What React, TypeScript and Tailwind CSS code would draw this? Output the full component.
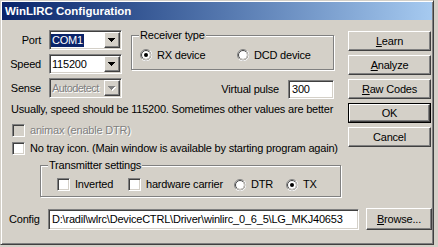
import type { ReactNode } from "react";

const sunken =
  "border border-t-[#808080] border-l-[#808080] border-r-white border-b-white shadow-[inset_1px_1px_0_#404040,inset_-1px_-1px_0_#d4d0c8]";
const raised =
  "border border-t-white border-l-white border-r-[#404040] border-b-[#404040] shadow-[inset_-1px_-1px_0_#808080]";
const etched = "border border-[#808080] shadow-[inset_1px_1px_0_#fff,1px_1px_0_#fff]";
const grayText = "text-[#808080] [text-shadow:1px_1px_0_#fff]";

function Arrow({ disabled }: { disabled?: boolean }) {
  const tri = (dx: number, fill: string) => (
    <g fill={fill} transform={`translate(${dx} ${dx})`}>
      <rect x="0" y="0" width="7" height="1" />
      <rect x="1" y="1" width="5" height="1" />
      <rect x="2" y="2" width="3" height="1" />
      <rect x="3" y="3" width="1" height="1" />
    </g>
  );
  return (
    <svg width="8" height="5" viewBox="0 0 8 5" shapeRendering="crispEdges">
      {disabled && tri(1, "#fff")}
      {tri(0, disabled ? "#808080" : "#000")}
    </svg>
  );
}

function Combo({ children, disabled }: { children: ReactNode; disabled?: boolean }) {
  return (
    <div
      className={`${sunken} ml-[8px] w-[73px] h-[20px] p-[1px] flex ${
        disabled ? "bg-[#d4d0c8]" : "bg-white"
      }`}
    >
      <div className="flex-1 flex items-center overflow-hidden whitespace-nowrap">{children}</div>
      <div className={`${raised} w-[16px] h-[16px] bg-[#d4d0c8] flex items-center justify-center`}>
        <Arrow disabled={disabled} />
      </div>
    </div>
  );
}

function Radio({ checked }: { checked?: boolean }) {
  return (
    <svg width="12" height="12" viewBox="0 0 12 12" className="shrink-0">
      <circle cx="6" cy="6" r="5.5" fill="#fff" stroke="#808080" />
      <path d="M10.2 1.8 A5.5 5.5 0 0 1 1.8 10.2" fill="none" stroke="#fff" />
      <circle cx="6" cy="6" r="4.5" fill="#fff" stroke="#404040" />
      <path d="M9.2 2.8 A4.5 4.5 0 0 1 2.8 9.2" fill="none" stroke="#d4d0c8" />
      {checked && <circle cx="6" cy="6" r="2" fill="#000" />}
    </svg>
  );
}

function Check({ disabled }: { disabled?: boolean }) {
  return (
    <div
      className={`${sunken} w-[13px] h-[13px] shrink-0 ${disabled ? "bg-[#d4d0c8]" : "bg-white"}`}
    />
  );
}

function Group({ label, className, children }: { label: string; className: string; children: ReactNode }) {
  return (
    <div className={`relative ${etched} ${className}`}>
      <span className="absolute -top-[7px] left-[7px] px-[1px] bg-[#d4d0c8] leading-[13px]">
        {label}
      </span>
      {children}
    </div>
  );
}

function Button({ children, def, className = "" }: { children: ReactNode; def?: boolean; className?: string }) {
  if (def)
    return (
      <div className={`border border-black h-[20px] ${className}`}>
        <div className={`${raised} h-full flex items-center justify-center`}>{children}</div>
      </div>
    );
  return (
    <div className={`${raised} h-[20px] flex items-center justify-center ${className}`}>{children}</div>
  );
}

export default function App() {
  return (
    <div className="w-[438px] h-[247px] bg-[#d4d0c8] font-['Liberation_Sans',Arial,sans-serif] text-[11px] leading-[13px] tracking-[-0.2px] text-black">
      <div className="w-[434px] h-[245px] p-[1px] border border-t-[#d4d0c8] border-l-[#d4d0c8] border-r-[#404040] border-b-[#404040] shadow-[inset_1px_1px_0_#fff,inset_-1px_-1px_0_#808080] flex flex-col">
        {/* title bar */}
        <div className="h-[18px] bg-linear-to-r from-[#0a246a] to-[#a6caf0] pl-[3px] flex items-center text-white font-bold text-[11.5px] tracking-normal">
          WinLIRC Configuration
        </div>

        <div className="flex flex-col pt-[10px]">
          <div className="flex">
            {/* left area */}
            <div className="w-[339px] flex flex-col">
              <div className="flex">
                <div className="flex flex-col gap-[4px]">
                  <div className="h-[20px] flex items-center">
                    <span className="w-[39px] text-right">Port</span>
                    <Combo>
                      <span className="bg-[#0a246a] text-white px-[1px]">COM1</span>
                    </Combo>
                  </div>
                  <div className="h-[20px] flex items-center">
                    <span className="w-[39px] text-right">Speed</span>
                    <Combo>
                      <span className="pl-[1px]">115200</span>
                    </Combo>
                  </div>
                  <div className="h-[20px] flex items-center">
                    <span className="w-[39px] text-right">Sense</span>
                    <Combo disabled>
                      <span className={`pl-[1px] tracking-[-0.6px] ${grayText}`}>Autodetect</span>
                    </Combo>
                  </div>
                </div>

                <div className="ml-[9px] w-[203px] flex flex-col">
                  <Group label="Receiver type" className="mt-[5px] h-[35px]">
                    <div className="flex pl-[8px] pt-[13px]">
                      <div className="w-[97px] h-[12px] flex items-center gap-[5px]">
                        <Radio checked />
                        <span>RX device</span>
                      </div>
                      <div className="h-[12px] flex items-center gap-[5px]">
                        <Radio />
                        <span>DCD device</span>
                      </div>
                    </div>
                  </Group>
                  <div className="mt-[10px] h-[19px] flex items-center justify-end">
                    <span>Virtual pulse</span>
                    <div className={`${sunken} ml-[9px] w-[46px] h-[19px] bg-white flex items-center pl-[3px]`}>
                      300
                    </div>
                  </div>
                </div>
              </div>

              <div className="mt-[4px] ml-[9px] whitespace-nowrap">
                Usually, speed should be 115200. Sometimes other values are better
              </div>

              <div className="mt-[8px] ml-[10px] h-[13px] flex items-center gap-[5px]">
                <Check disabled />
                <span className={grayText}>animax (enable DTR)</span>
              </div>
              <div className="mt-[5px] ml-[10px] h-[13px] flex items-center gap-[5px]">
                <Check />
                <span className="whitespace-nowrap">
                  No tray icon. (Main window is available by starting program again)
                </span>
              </div>

              <Group label="Transmitter settings" className="mt-[10px] ml-[38px] w-[301px] h-[32px]">
                <div className="flex pl-[16px] pt-[12px]">
                  <div className="w-[71px] h-[13px] flex items-center gap-[5px]">
                    <Check />
                    <span>Inverted</span>
                  </div>
                  <div className="w-[106px] h-[13px] flex items-center gap-[5px]">
                    <Check />
                    <span>hardware carrier</span>
                  </div>
                  <div className="w-[52px] h-[13px] flex items-center gap-[5px]">
                    <Radio />
                    <span>DTR</span>
                  </div>
                  <div className="h-[13px] flex items-center gap-[5px]">
                    <Radio checked />
                    <span>TX</span>
                  </div>
                </div>
              </Group>
            </div>

            {/* buttons */}
            <div className="ml-[7px] w-[83px] pt-[1px] flex flex-col gap-[4px]">
              <Button>
                <span>
                  <u>L</u>earn
                </span>
              </Button>
              <Button>
                <span>
                  <u>A</u>nalyze
                </span>
              </Button>
              <Button>
                <span>
                  <u>R</u>aw Codes
                </span>
              </Button>
              <Button def>OK</Button>
              <Button>Cancel</Button>
            </div>
          </div>

          {/* config row */}
          <div className="mt-[11px] pl-[7px] h-[22px] flex items-center">
            <span className="w-[39px]">Config</span>
            <div className={`${sunken} w-[311px] h-[21px] bg-white flex items-center pl-[3px] overflow-hidden whitespace-nowrap`}>
              D:\radil\wlrc\DeviceCTRL\Driver\winlirc_0_6_5\LG_MKJ40653
            </div>
            <Button className="ml-[7px] w-[66px] !h-[22px]">
              <span>
                <u>B</u>rowse...
              </span>
            </Button>
          </div>
        </div>
      </div>
    </div>
  );
}
